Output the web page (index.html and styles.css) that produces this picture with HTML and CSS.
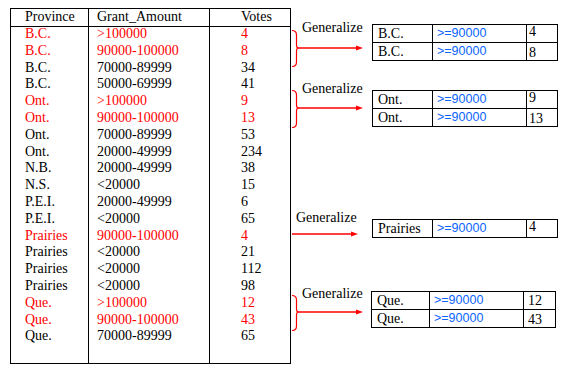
FILE: index.html
```html
<!DOCTYPE html>
<html>
<head>
<meta charset="utf-8">
<link rel="stylesheet" href="styles.css">
</head>
<body>
<div class="page">
  <div class="main">
    <div class="row head"><div>Province</div><div>Grant_Amount</div><div>Votes</div></div>
    <div class="row red"><div>B.C.</div><div>&gt;100000</div><div>4</div></div>
    <div class="row red"><div>B.C.</div><div>90000-100000</div><div>8</div></div>
    <div class="row"><div>B.C.</div><div>70000-89999</div><div>34</div></div>
    <div class="row"><div>B.C.</div><div>50000-69999</div><div>41</div></div>
    <div class="row red"><div>Ont.</div><div>&gt;100000</div><div>9</div></div>
    <div class="row red"><div>Ont.</div><div>90000-100000</div><div>13</div></div>
    <div class="row"><div>Ont.</div><div>70000-89999</div><div>53</div></div>
    <div class="row"><div>Ont.</div><div>20000-49999</div><div>234</div></div>
    <div class="row"><div>N.B.</div><div>20000-49999</div><div>38</div></div>
    <div class="row"><div>N.S.</div><div>&lt;20000</div><div>15</div></div>
    <div class="row"><div>P.E.I.</div><div>20000-49999</div><div>6</div></div>
    <div class="row"><div>P.E.I.</div><div>&lt;20000</div><div>65</div></div>
    <div class="row red"><div>Prairies</div><div>90000-100000</div><div>4</div></div>
    <div class="row"><div>Prairies</div><div>&lt;20000</div><div>21</div></div>
    <div class="row"><div>Prairies</div><div>&lt;20000</div><div>112</div></div>
    <div class="row"><div>Prairies</div><div>&lt;20000</div><div>98</div></div>
    <div class="row red"><div>Que.</div><div>&gt;100000</div><div>12</div></div>
    <div class="row red"><div>Que.</div><div>90000-100000</div><div>43</div></div>
    <div class="row"><div>Que.</div><div>70000-89999</div><div>65</div></div>
    <div class="row fill"><div></div><div></div><div></div></div>
  </div>

  <div class="right">
    <div class="group g1">
      <div class="conn">
        <svg width="81" height="47" viewBox="0 0 81 47">
          <path class="brace" d="M1,10.5 C4,10.5 5.5,12 5.5,15 L5.5,25 C5.5,27 6,28 7.5,28 C6,28 5.5,29 5.5,31 L5.5,42 C5.5,45 4,46.5 1,46.5"/>
          <path class="shaft" d="M7,28 H66"/>
          <polygon class="head" points="65,25.5 72,28 65,30.5"/>
        </svg>
        <span class="label">Generalize</span>
      </div>
      <div class="mini">
        <div>B.C.</div><div class="amt">&gt;=90000</div><div class="n t">4</div>
        <div>B.C.</div><div class="amt">&gt;=90000</div><div class="n b">8</div>
      </div>
    </div>

    <div class="group g2">
      <div class="conn">
        <svg width="81" height="47" viewBox="0 0 81 47">
          <path class="brace" d="M1,9.5 C4,9.5 5.5,11 5.5,14 L5.5,24 C5.5,26 6,27 7.5,27 C6,27 5.5,28 5.5,30 L5.5,42 C5.5,45 4,46.5 1,46.5"/>
          <path class="shaft" d="M7,27 H66"/>
          <polygon class="head" points="65,24.5 72,27 65,29.5"/>
        </svg>
        <span class="label">Generalize</span>
      </div>
      <div class="mini">
        <div>Ont.</div><div class="amt">&gt;=90000</div><div class="n t">9</div>
        <div>Ont.</div><div class="amt">&gt;=90000</div><div class="n b">13</div>
      </div>
    </div>

    <div class="group g3">
      <div class="conn">
        <svg width="81" height="30" viewBox="0 0 81 30">
          <path class="shaft" d="M1,24 H61"/>
          <polygon class="head" points="60,21.5 67,24 60,26.5"/>
        </svg>
        <span class="label">Generalize</span>
      </div>
      <div class="mini single">
        <div>Prairies</div><div class="amt">&gt;=90000</div><div class="n t">4</div>
      </div>
    </div>

    <div class="group g4">
      <div class="conn">
        <svg width="81" height="45" viewBox="0 0 81 45">
          <path class="brace" d="M1,9.5 C4,9.5 5.5,11 5.5,14 L5.5,23 C5.5,25 6,26 7.5,26 C6,26 5.5,27 5.5,29 L5.5,40 C5.5,43 4,44.5 1,44.5"/>
          <path class="shaft" d="M7,26 H66"/>
          <polygon class="head" points="65,23.5 72,26 65,28.5"/>
        </svg>
        <span class="label">Generalize</span>
      </div>
      <div class="mini que">
        <div>Que.</div><div class="amt">&gt;=90000</div><div class="n">12</div>
        <div>Que.</div><div class="amt">&gt;=90000</div><div class="n b">43</div>
      </div>
    </div>
  </div>
</div>
</body>
</html>
```

FILE: styles.css
```css
* { box-sizing: border-box; }

html, body {
  margin: 0;
  padding: 0;
  background: #fff;
}

body {
  font-family: "Liberation Serif", "Times New Roman", serif;
  font-size: 14px;
  color: #000;
}

.page {
  display: flex;
  align-items: flex-start;
  padding: 8px 0 0 10px;
}

/* main table */
.main {
  display: grid;
  grid-template-columns: 77px 121px 81px;
  grid-template-rows: 18px repeat(19, 16.8px) 1fr;
  width: 281px;
  height: 356px;
  border: 1px solid #000;
}

.row { display: contents; }

.row > div {
  line-height: 13px;
  white-space: nowrap;
}

.row > div:nth-child(1) { padding-left: 14px; }
.row > div:nth-child(2) { padding-left: 8px; border-left: 1px solid #000; }
.row > div:nth-child(3) { padding-left: 31px; border-left: 1px solid #000; }

.row.head > div {
  line-height: 16px;
  border-bottom: 1px solid #000;
}

.red { color: #ff0000; }

/* right side */
.right {
  display: flex;
  flex-direction: column;
  width: 266px;
}

.group {
  display: flex;
  align-items: flex-start;
}

.g1 { margin-top: 12px; height: 47px; }
.g2 { margin-top: 14px; height: 47px; }
.g3 { margin-top: 82px; height: 30px; }
.g4 { margin-top: 46px; height: 45px; }

.conn {
  position: relative;
  width: 81px;
  height: 100%;
  flex: none;
}

.conn svg { display: block; }

.brace {
  fill: none;
  stroke: #ff0000;
  stroke-width: 1.2;
}

.shaft {
  fill: none;
  stroke: #ff0000;
  stroke-width: 1.6;
}

.head { fill: #ff0000; }

.label {
  position: absolute;
  top: 0;
  left: 11px;
  line-height: 16.8px;
  white-space: nowrap;
}

.g3 .label { left: 5px; }

.mini {
  display: grid;
  grid-template-columns: 60px 94px 31px;
  grid-auto-rows: 18px;
  border-top: 1px solid #000;
  border-left: 1px solid #000;
  flex: none;
}

.g1 .mini { margin-top: 4px; }
.g2 .mini { margin-top: 9px; }
.g3 .mini { margin-top: 9px; }
.g4 .mini { margin-top: 5px; margin-left: -1px; grid-template-columns: 58px 94px 32px; }

.mini > div {
  border-right: 1px solid #000;
  border-bottom: 1px solid #000;
  line-height: 17px;
  padding-left: 5px;
  white-space: nowrap;
}

.mini > .amt {
  font-family: "Liberation Sans", Arial, sans-serif;
  font-size: 12.5px;
  color: #0a64ff;
  padding-left: 4px;
}

.mini > .n { padding-left: 2px; }
.mini.que > .n { padding-left: 4px; }
.mini > .n.t { line-height: 14px; }
.mini > .n.b { line-height: 19px; }
```
